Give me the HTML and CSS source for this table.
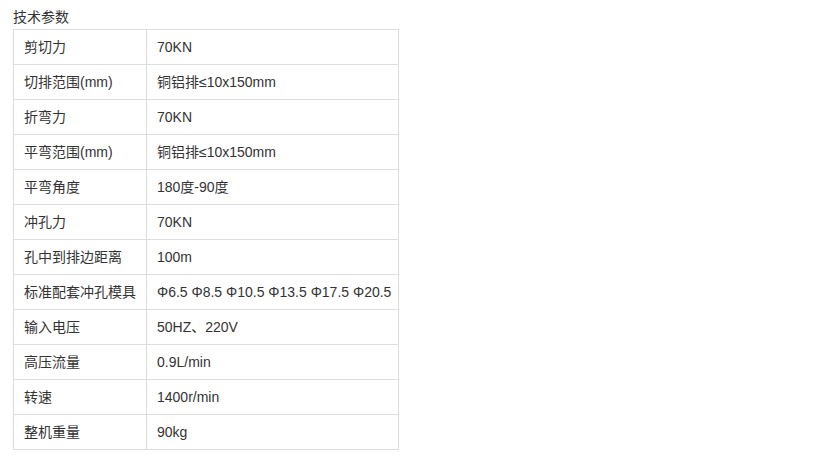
FILE: index.html
```html
<!DOCTYPE html>
<html lang="zh-CN">
<head>
<meta charset="utf-8">
<link rel="stylesheet" href="styles.css">
</head>
<body>
<div class="page">
  <div class="title">技术参数</div>
  <table class="spec">
    <tbody>
      <tr><td class="k">剪切力</td><td class="v">70KN</td></tr>
      <tr><td class="k">切排范围(mm)</td><td class="v">铜铝排≤10x150mm</td></tr>
      <tr><td class="k">折弯力</td><td class="v">70KN</td></tr>
      <tr><td class="k">平弯范围(mm)</td><td class="v">铜铝排≤10x150mm</td></tr>
      <tr><td class="k">平弯角度</td><td class="v">180度-90度</td></tr>
      <tr><td class="k">冲孔力</td><td class="v">70KN</td></tr>
      <tr><td class="k">孔中到排边距离</td><td class="v">100m</td></tr>
      <tr><td class="k">标准配套冲孔模具</td><td class="v">Φ6.5 Φ8.5 Φ10.5 Φ13.5 Φ17.5 Φ20.5</td></tr>
      <tr><td class="k">输入电压</td><td class="v">50HZ、220V</td></tr>
      <tr><td class="k">高压流量</td><td class="v">0.9L/min</td></tr>
      <tr><td class="k">转速</td><td class="v">1400r/min</td></tr>
      <tr><td class="k">整机重量</td><td class="v">90kg</td></tr>
    </tbody>
  </table>
</div>
</body>
</html>
```
FILE: styles.css
```css
html, body {
  margin: 0;
  padding: 0;
  background: #fff;
}
body {
  font-family: "Liberation Sans", "Noto Sans CJK SC", sans-serif;
  font-size: 14px;
  color: #333;
}
.page {
  padding: 7px 0 0 13px;
}
.title {
  height: 22px;
  line-height: 20px;
}
.spec {
  border-collapse: collapse;
  border: 1px solid #ddd;
  table-layout: fixed;
  width: 385px;
}
.spec td {
  border: 1px solid #ddd;
  height: 35px;
  padding: 0 0 0 10px;
  box-sizing: border-box;
  vertical-align: middle;
  line-height: 20px;
  white-space: nowrap;
}
.spec td.k {
  width: 133px;
}
.spec td.v {
  width: 252px;
}
```
